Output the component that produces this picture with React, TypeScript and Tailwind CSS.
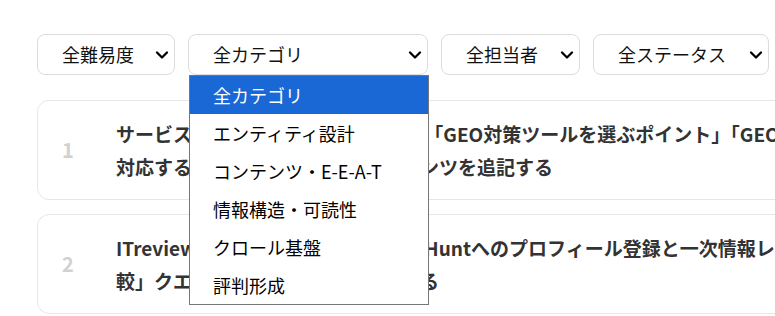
import React from "react";
import { ChevronDown } from "lucide-react";

const categories = [
  "全カテゴリ",
  "エンティティ設計",
  "コンテンツ・E-E-A-T",
  "情報構造・可読性",
  "クロール基盤",
  "評判形成",
];

function FakeSelect({ label, width, children }: { label: string; width: string; children?: React.ReactNode }) {
  return (
    <div className={`relative ${width}`}>
      <div className="flex h-[41px] items-center justify-between rounded-lg border border-[#dcdcdc] bg-white pl-6 pr-[2px] text-[18px] text-[#111]">
        <span>{label}</span>
        <ChevronDown size={20} strokeWidth={2.75} className="text-black" />
      </div>
      {children}
    </div>
  );
}

const tasks = [
  {
    n: 1,
    lines: [
      "サービスサイトとブログのトップに 「GEO対策ツールを選ぶポイント」「GEO対策ツール比較」",
      "対応する比較表と選定基準のコンテンツを追記する",
    ],
  },
  {
    n: 2,
    lines: [
      "ITreview・BOXIL SaaS・ Product Huntへのプロフィール登録と一次情報レビューの掲載で「GEOツール比",
      "較」クエリで常に引用されやすくする",
    ],
  },
];

export default function App() {
  return (
    <div
      className="h-[316px] w-[775px] overflow-hidden bg-white"
      style={{ fontFamily: '"Noto Sans CJK JP", "Noto Sans", sans-serif' }}
    >
      <div className="w-[1200px] pl-[37px] pt-[34px]">
        <div className="relative z-10 flex gap-[13px]">
          <FakeSelect label="全難易度" width="w-[138px]" />
          <FakeSelect label="全カテゴリ" width="w-[240px]">
            <div className="absolute left-px top-[41px] w-[240px] border border-[#767676] bg-white">
              {categories.map((c, i) => (
                <div
                  key={c}
                  className={`flex h-[38px] items-center pl-[23px] text-[18px] ${
                    i === 0 ? "bg-[#1a68d6] text-white" : "text-black"
                  }`}
                >
                  {c}
                </div>
              ))}
            </div>
          </FakeSelect>
          <FakeSelect label="全担当者" width="w-[139px]" />
          <FakeSelect label="全ステータス" width="w-[176px]" />
        </div>

        <div className="mt-[25px] flex w-[1100px] flex-col gap-[14px]">
          {tasks.map((t) => (
            <div
              key={t.n}
              className="flex items-center gap-6 rounded-xl border border-[#e5e7eb] bg-white py-4 pl-6"
            >
              <div className="w-[30px] text-[20px] font-bold text-[#d1d1d1]">{t.n}</div>
              <div className="whitespace-pre text-[19px] font-bold leading-[33px] text-[#333]">
                {t.lines[0]}
                <br />
                {t.lines[1]}
              </div>
            </div>
          ))}
        </div>
      </div>
    </div>
  );
}
